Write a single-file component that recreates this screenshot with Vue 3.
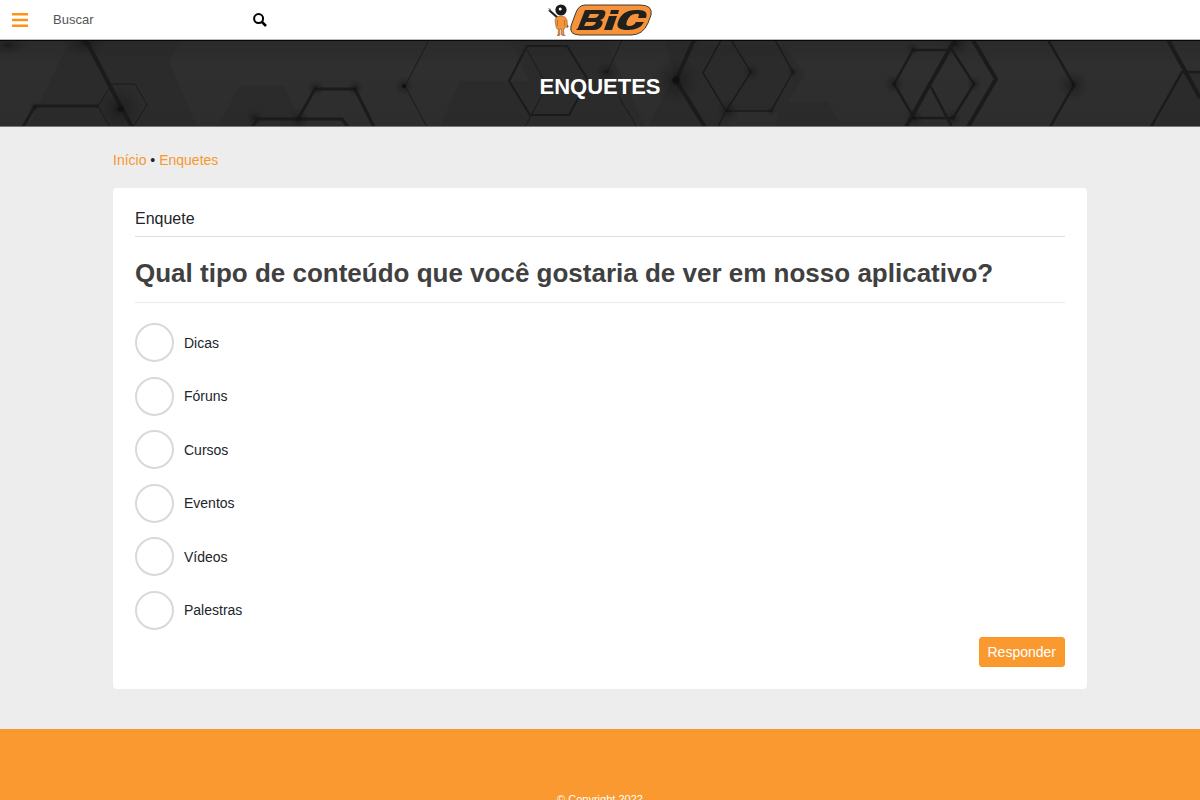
<script setup>
import { ref } from 'vue'

const options = ['Dicas', 'Fóruns', 'Cursos', 'Eventos', 'Vídeos', 'Palestras']
const answer = ref('')
const search = ref('')
</script>

<template>
  <div class="page">
    <header class="topbar">
      <div class="tools">
        <button class="icon-button menu" type="button" aria-label="Menu">
          <svg width="16" height="14" viewBox="0 0 16 14" aria-hidden="true">
            <path d="M0 1.200h16M0 7h16M0 12.800h16" stroke="#ff9314" stroke-width="2.400" />
          </svg>
        </button>
        <form class="search" role="search" @submit.prevent>
          <input v-model="search" type="text" placeholder="Buscar" aria-label="Buscar" />
          <button class="icon-button" type="submit" aria-label="Pesquisar">
            <svg width="14" height="14" viewBox="0 0 14 14" fill="none" stroke="#000" aria-hidden="true">
              <circle cx="5.6" cy="5.6" r="4.5" stroke-width="2" />
              <path d="M9 9l4 4" stroke-width="2.5" />
            </svg>
          </button>
        </form>
      </div>
      <a class="logo" href="#" aria-label="BIC">
        <svg width="106" height="34" viewBox="0 0 106 34" aria-hidden="true">
          <path d="M2 7L21 24" stroke="#20201e" stroke-width="2.200" />
          <path d="M1 5l3 1-1 2z" fill="#777" />
          <path d="M9.500 14Q14 12.500 18 14L20 17L20.500 24H18L17.500 26H16.500L17 32H14.500V26H13V32H11L11.500 26H10L9 23.500L8 17Z" fill="#f7953b" stroke="#8f5930" stroke-width=".6" />
          <path d="M10.500 17v6M17.500 17v6" stroke="#8f5930" stroke-width=".6" />
          <path d="M12.500 32.500h-2.500M15.500 32.500h3" stroke="#9b8175" />
          <circle cx="14" cy="7" r="5.600" fill="#181818" />
          <circle cx="13.200" cy="6" r="1.500" fill="#fff" />
          <path d="M38 2H93Q106 2 104 12L101 20Q96 32 84 32H33Q22 32 24 23L28 12Q31 2 38 2Z" fill="#f69239" stroke="#45392e" stroke-width="1" />
          <path fill-rule="evenodd" fill="#20201e" d="M38 7H54Q60 7 58 12Q57 16 53 17Q57 18 55 22Q53 27 46 27H29L31 25ZM43 11L41 15H47Q51 15 52 11ZM39 19L37 23H43Q48 23 49 19Z" />
          <path fill="#20201e" d="M62 13H70L65 27H57ZM64 7H72L71 11H63ZM99 15H91L92 12Q92 10 88 11Q83 11 80 18Q78 23 82 23Q87 23 89 19H97Q93 27 81 27Q68 27 71 19Q75 7 89 7Q102 6 99 15Z" />
        </svg>
      </a>
    </header>

    <section class="banner">
      <svg class="pattern" viewBox="0 0 1200 87" preserveAspectRatio="xMidYMid slice" aria-hidden="true">
        <defs>
          <radialGradient id="glow">
            <stop offset="0" stop-color="#0c0c0c" stop-opacity=".6" />
            <stop offset=".3" stop-color="#171717" stop-opacity=".4" />
            <stop offset="1" stop-color="#1d1d1d" stop-opacity="0" />
          </radialGradient>
          <linearGradient id="base" x2="0" y2="1">
            <stop stop-color="#2a2a2a" />
            <stop offset=".3" stop-color="#2f2f2f" />
            <stop offset="1" stop-color="#2d2d2d" />
          </linearGradient>
        </defs>
        <path d="M0 0H1200V87H0Z" fill="url(#base)" />
        <g fill="#262626" opacity=".35">
          <path d="M72 0H160L197 87H28L65 10ZM239 46H284L302 87H218ZM460 41H540L565 87H440ZM510 0H605L645 87H550ZM665 0H700L730 87H648L675 35ZM780 62H828L842 87H775ZM1180 33H1200V87H1156Z" />
          <path d="M137 0h43l-12 25h-20zM700 4h83l22 31-24 37h-77l-20-38zM497 41h28l-18 46h-27z" />
        </g>
        <g fill="none" stroke="#1b1b1b" stroke-width="1">
          <path stroke-width="4" d="M86 0L121 67L132 87M694 0L676 40L705 87M955 0L931 42L906 87M973 0L996 39L968 87M1168 0L1200 58" />
          <path stroke-width="3" d="M23 87L35 66H99M252 87L258 79H298L315 49H355L374 87M300 79H342L348 87" />
          <path d="M98 66L112 44H135L147 65L133 87M98 66L110 87M429 0L405 46L427 87" />
          <path stroke-width="2" d="M509 41L527 6H567L588 40L569 75H530Z" />
          <path d="M527 10L544 40M544 51L525 87M622 0L607 33M619 57L637 87" />
          <path stroke-width="1.500" d="M721 0L703 33L726 71L751 32L731 0M775 0L793 32L771 71H726L718 87" />
          <path stroke-width="2.500" d="M894 44L913 10H952L974 44L953 78H914ZM931 47L952 87M1048 0L1074 45L1050 87M1151 87L1182 32H1200" />
        </g>
        <g fill="url(#glow)">
          <ellipse cx="8" cy="5" rx="20" ry="10" />
          <ellipse cx="85" cy="3" rx="22" ry="13" />
          <circle cx="119" cy="69" r="22" />
          <circle cx="35" cy="67" r="6" />
          <circle cx="255" cy="78" r="9" />
          <circle cx="299" cy="79" r="11" />
          <circle cx="316" cy="48" r="9" />
          <circle cx="355" cy="48" r="9" />
          <circle cx="404" cy="46" r="10" />
          <circle cx="606" cy="32" r="11" />
          <circle cx="676" cy="40" r="25" />
          <circle cx="751" cy="32" r="9" />
          <circle cx="793" cy="32" r="6" />
          <circle cx="728" cy="71" r="12" />
          <circle cx="771" cy="71" r="5" />
          <circle cx="894" cy="44" r="11" />
          <circle cx="913" cy="9" r="7" />
          <circle cx="956" cy="4" r="14" />
          <circle cx="914" cy="78" r="11" />
          <circle cx="953" cy="78" r="9" />
          <circle cx="974" cy="44" r="8" />
          <circle cx="1073" cy="45" r="16" />
        </g>
        <g fill="#101010">
          <circle cx="121" cy="69" r="2.500" />
          <circle cx="404" cy="46" r="2" />
          <circle cx="676" cy="40" r="3.500" />
        </g>
      </svg>
      <h1>ENQUETES</h1>
    </section>

    <main class="content">
      <nav class="breadcrumb" aria-label="Navegação">
        <a href="#">Início</a> • <a href="#">Enquetes</a>
      </nav>
      <section class="card">
        <p class="label">Enquete</p>
        <form @submit.prevent>
          <h2 id="question">Qual tipo de conteúdo que você gostaria de ver em nosso aplicativo?</h2>
          <div class="options" role="radiogroup" aria-labelledby="question">
            <label v-for="option in options" :key="option" class="option">
              <input v-model="answer" type="radio" name="answer" :value="option" />
              <span>{{ option }}</span>
            </label>
          </div>
          <div class="actions"><button class="submit" type="submit">Responder</button></div>
        </form>
      </section>
    </main>

    <footer class="footer">© Copyright 2022</footer>
  </div>
</template>

<style>
body {
  background: #ededed;
}
</style>

<style scoped>
.page {
  height: 100vh;
  overflow: hidden;
  font-family: "Liberation Sans", Arial, sans-serif;
  font-size: 14px;
  line-height: 20px;
  color: #212529;
}
.page * {
  box-sizing: border-box;
}
.topbar {
  display: grid;
  grid-template-columns: 1fr auto 1fr;
  align-items: center;
  height: 40px;
  background: #fff;
  border-bottom: 1px solid #b8bcbe;
}
.tools {
  display: flex;
  align-items: center;
  padding-left: 12px;
}
.icon-button {
  display: flex;
  padding: 0;
  border: 0;
  background: transparent;
  cursor: pointer;
}
.search {
  display: flex;
  align-items: center;
  margin-left: 25px;
}
.search input {
  width: 200px;
  padding: 0;
  border: 0;
  outline: 0;
  font: inherit;
  font-size: 13px;
  color: #333;
}
.search input::placeholder {
  color: #555;
  opacity: 1;
}
.logo {
  display: flex;
}
.banner {
  position: relative;
  display: flex;
  align-items: center;
  justify-content: center;
  height: 87px;
  background: #2d2d2d;
  border-top: 1px solid #080808;
  border-bottom: 1px solid #777;
  overflow: hidden;
}
.pattern {
  position: absolute;
  inset: 0;
  width: 100%;
  height: 100%;
}
h1 {
  position: relative;
  margin: 0;
  padding-top: 6px;
  font-size: 22px;
  line-height: 26px;
  color: #fff;
}
.content {
  padding: 23px 113px 40px;
}
.breadcrumb {
  margin-bottom: 18px;
}
.breadcrumb a {
  color: #fa962d;
  text-decoration: none;
}
.card {
  padding: 21px 22px 22px;
  background: #fff;
  border-radius: 4px;
}
.label {
  margin: 0;
  padding-bottom: 7px;
  font-size: 16px;
  border-bottom: 1px solid #dedede;
}
h2 {
  margin: 0 0 20px;
  padding: 20px 0 13px;
  font-size: 26px;
  line-height: 32px;
  color: #404040;
  border-bottom: 1px solid #eaeaea;
}
.options {
  display: flex;
  flex-direction: column;
  justify-content: space-between;
  min-height: 307px;
}
.option {
  display: flex;
  align-items: center;
  align-self: flex-start;
  gap: 10px;
  cursor: pointer;
}
.option input {
  appearance: none;
  width: 39px;
  height: 39px;
  margin: 0;
  border: 2px solid #d9d9d9;
  border-radius: 50%;
  background: #fff;
}
.option input:checked {
  border-color: #fa982f;
  box-shadow: inset 0 0 0 8px #fff;
  background: #fa982f;
}
.actions {
  display: flex;
  justify-content: flex-end;
  margin-top: 7px;
}
.submit {
  height: 30px;
  padding: 0 8px;
  border: 1px solid #ff9713;
  border-radius: 3px;
  background: #fa992f;
  color: #fff;
  font: inherit;
  cursor: pointer;
}
.footer {
  padding: 60px 16px 32px;
  background: #fa992f;
  color: #fff;
  font-size: 11px;
  text-align: center;
}
</style>
